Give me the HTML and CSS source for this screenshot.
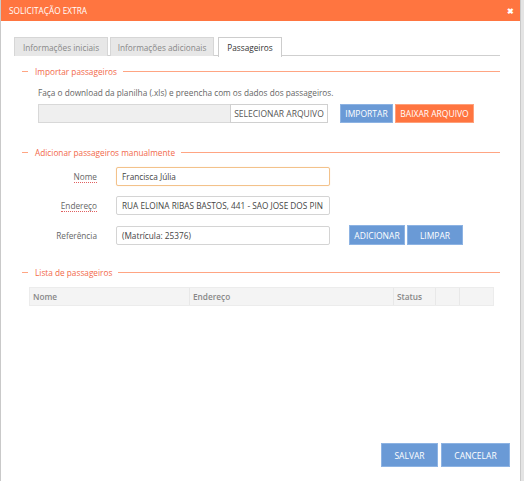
FILE: index.html
```html
<!DOCTYPE html>
<html lang="pt-BR">
<head>
<meta charset="utf-8">
<title>Solicitação extra</title>
<link rel="stylesheet" href="styles.css">
</head>
<body>
<div class="dialog">
  <div class="titlebar">
    <span class="title">SOLICITAÇÃO EXTRA</span>
    <span class="close">✖</span>
  </div>
  <div class="content">
    <div class="tabs">
      <div class="tab t1">Informações iniciais</div>
      <div class="tab t2">Informações adicionais</div>
      <div class="tab t3 active">Passageiros</div>
    </div>

    <div class="section s-import">
      <div class="legend"><span>Importar passageiros</span></div>
      <div class="section-body">
        <p class="hint">Faça o download da planilha (.xls) e preencha com os dados dos passageiros.</p>
        <div class="file-row">
          <div class="file-name"></div>
          <div class="file-btn">SELECIONAR ARQUIVO</div>
          <div class="btn blue import">IMPORTAR</div>
          <div class="btn orange">BAIXAR ARQUIVO</div>
        </div>
      </div>
    </div>

    <div class="section s-manual">
      <div class="legend"><span>Adicionar passageiros manualmente</span></div>
      <div class="form">
        <label class="lbl req">Nome</label>
        <div class="field"><div class="input focus">Francisca Júlia</div></div>
        <label class="lbl req">Endereço</label>
        <div class="field"><div class="input">RUA ELOINA RIBAS BASTOS, 441 - SAO JOSE DOS PIN</div></div>
        <label class="lbl">Referência</label>
        <div class="field">
          <div class="input">(Matrícula: 25376)</div>
          <div class="actions">
            <div class="btn blue w56">ADICIONAR</div>
            <div class="btn blue w56">LIMPAR</div>
          </div>
        </div>
      </div>
    </div>

    <div class="section s-list">
      <div class="legend"><span>Lista de passageiros</span></div>
      <div class="table">
        <div class="th c1">Nome</div>
        <div class="th c2">Endereço</div>
        <div class="th c3">Status</div>
        <div class="th c4"></div>
        <div class="th c5"></div>
      </div>
    </div>
  </div>
  <div class="footer">
    <div class="btn blue big w57">SALVAR</div>
    <div class="btn blue big w69">CANCELAR</div>
  </div>
</div>
</body>
</html>
```

FILE: styles.css
```css
* { box-sizing: border-box; }
html, body { margin: 0; padding: 0; }
body {
  background: #e4e4e4;
  font-family: "Open Sans", "Noto Sans", sans-serif;
  font-size: 8.25px;
  color: #555;
  width: 524px;
  height: 481px;
  overflow: hidden;
}
.dialog {
  width: 521px;
  height: 481px;
  background: #fff;
  border-left: 1px solid #c9c9c9;
  border-right: 1px solid #c9c9c9;
  display: flex;
  flex-direction: column;
}
.titlebar {
  height: 21px;
  background: #ff7540;
  color: #fff;
  display: flex;
  align-items: center;
  justify-content: space-between;
  padding: 0 6px 0 8px;
  font-size: 8.25px;
}
.close { font-size: 8px; font-weight: bold; }
.content { padding: 16px 20px 0 13px; }
.tabs {
  display: flex;
  height: 19px;
  border-bottom: 1px solid #cfcfcf;
}
.tab {
  height: 19px;
  margin-right: 2px;
  display: flex;
  align-items: center;
  justify-content: center;
  background: #e7e7e7;
  border: 1px solid #d6d6d6;
  border-bottom: none;
  color: #888;
  white-space: nowrap;
}
.t1 { width: 94px; }
.t2 { width: 104px; margin-right: 4px; }
.t3 { width: 64px; }
.tab.active {
  background: #fff;
  color: #333;
  border-color: #cdcdcd;
  height: 20px;
  margin-bottom: -1px;
}
.section { margin-left: 8px; }
.legend {
  display: flex;
  align-items: center;
  height: 12px;
  color: #f2694a;
}
.legend::before {
  content: "";
  width: 6px;
  height: 1px;
  background: #ffa583;
  margin-right: 7px;
}
.legend::after {
  content: "";
  flex: 1;
  height: 1px;
  background: #ffa583;
  margin-left: 6px;
}
.s-import { margin-top: 9px; }
.section-body { padding-left: 16px; }
.hint { margin: 9px 0 0; height: 13px; line-height: 13px; color: #666; }
.file-row { display: flex; margin-top: 5px; height: 19px; }
.file-name {
  width: 192px;
  background: #efefef;
  border: 1px solid #d8d8d8;
  border-right: none;
}
.file-btn {
  width: 98px;
  border: 1px solid #d0d0d0;
  display: flex;
  align-items: center;
  justify-content: center;
  color: #555;
  font-size: 8.5px;
  white-space: nowrap;
}
.btn {
  display: flex;
  align-items: center;
  justify-content: center;
  color: #fff;
  font-size: 8.5px;
  height: 19px;
  padding: 0 2px;
  white-space: nowrap;
}
.blue { background: #6a9ad6; border: 1px solid #8db3e3; }
.orange { background: #ff7540; border: 1px solid #ffa07a; margin-left: 2px; width: 79px; }
.import { margin-left: 12px; width: 53px; }
.s-manual { margin-top: 23px; }
.form {
  display: grid;
  grid-template-columns: 94px 1fr;
  row-gap: 10px;
  margin-top: 9px;
}
.lbl {
  justify-self: end;
  align-self: center;
  margin-right: 19px;
  color: #666;
}
.lbl.req { border-bottom: 1px dotted #e06060; line-height: 11px; }
.field { display: flex; align-items: center; }
.input {
  width: 214px;
  height: 19px;
  border: 1px solid #d4d4d4;
  border-radius: 2px;
  padding: 0 5px;
  display: flex;
  align-items: center;
  white-space: nowrap;
  overflow: hidden;
  color: #444;
}
.input.focus { border-color: #f3c28b; box-shadow: 0 0 1px #f7d2a8; }
.actions { display: flex; gap: 2px; margin-left: 19px; }
.w56 { width: 56px; height: 20px; }
.s-list { margin-top: 21px; }
.table {
  display: grid;
  grid-template-columns: 160px 204px 42px 24px 1fr;
  margin: 9px 6px 0 7px;
  height: 19px;
  background: #f4f4f4;
  border: 1px solid #ececec;
}
.th {
  display: flex;
  align-items: center;
  padding-left: 3px;
  color: #888;
  font-weight: 600;
  border-right: 1px solid #e8e8e8;
}
.th.c5 { border-right: none; }
.footer {
  margin-top: auto;
  display: flex;
  justify-content: flex-end;
  gap: 3px;
  padding: 0 10px 14px 0;
}
.big { height: 24px; }
.w57 { width: 57px; }
.w69 { width: 69px; }
```
